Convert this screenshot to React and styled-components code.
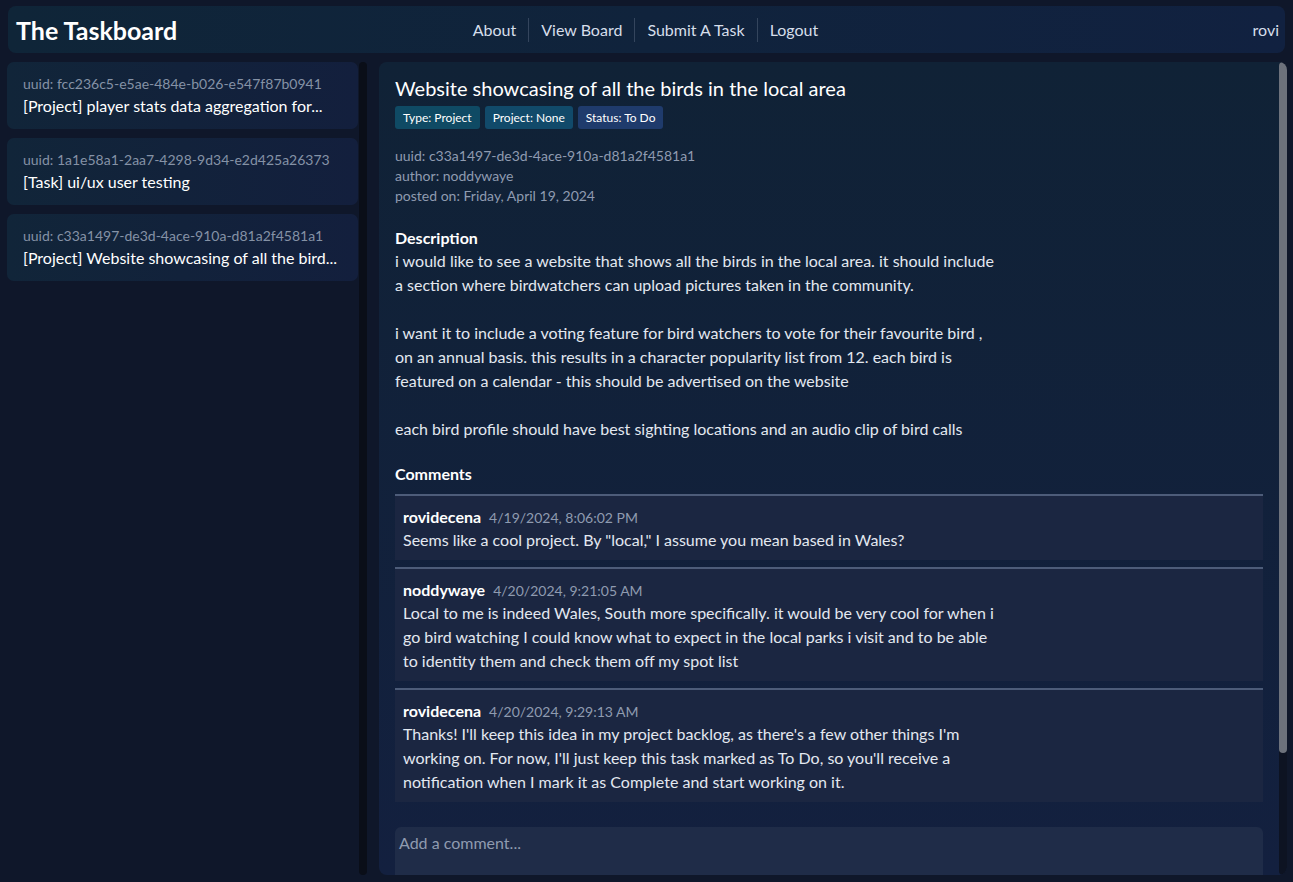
import React from 'react';
import styled, { createGlobalStyle } from 'styled-components';

const GlobalStyle = createGlobalStyle`
  html, body {
    margin: 0;
    padding: 0;
    height: 100%;
    background: #0f172a;
    font-family: Lato, "Noto Sans", sans-serif;
    color: #e8edf5;
  }
  #root {
    height: 100%;
  }
  * {
    box-sizing: border-box;
  }
`;

const Page = styled.div`
  height: 100vh;
  display: grid;
  grid-template-rows: 47px 1fr;
  gap: 9px;
  padding: 6px 6px 7px 7px;
`;

const Header = styled.header`
  display: grid;
  grid-template-columns: 1fr auto 1fr;
  align-items: center;
  padding: 0 6px 0 8px;
  margin: 0 2px 0 1px;
  border-radius: 8px;
  background: linear-gradient(90deg, #0f2538 0%, #112140 100%);
`;

const Brand = styled.h1`
  margin: 0;
  font-size: 25px;
  font-weight: 700;
  color: #ffffff;
`;

const Nav = styled.nav`
  display: flex;
  align-items: center;
  margin-right: 4px;
`;

const NavLink = styled.a`
  padding: 0 12px;
  font-size: 16px;
  line-height: 24px;
  color: #d6deea;
  text-decoration: none;
  border-left: ${p => (p.$first ? 'none' : '1px solid #34455d')};
`;

const User = styled.span`
  justify-self: end;
  font-size: 16px;
  color: #d6deea;
`;

const Body = styled.div`
  display: grid;
  grid-template-columns: 360px 1fr;
  gap: 12px;
  min-height: 0;
`;

const Sidebar = styled.aside`
  display: flex;
  gap: 1px;
  min-height: 0;
`;

const TaskList = styled.div`
  flex: 1;
  display: flex;
  flex-direction: column;
  gap: 9px;
  overflow: hidden;
`;

const Track = styled.div`
  width: 8px;
  flex-shrink: 0;
  display: flex;
  flex-direction: column;
  border-radius: 4px;
  background: ${p => p.$bg};
`;

const Thumb = styled.div`
  border-radius: 4px;
  background: #6d727c;
`;

const TaskCard = styled.div`
  padding: 13px 16px 12px 16px;
  border-radius: 7px;
  background: linear-gradient(90deg, #112539 0%, #131f3d 100%);
  flex-shrink: 0;
`;

const CardUuid = styled.div`
  font-size: 14px;
  line-height: 18px;
  color: #8592a6;
`;

const CardTitle = styled.div`
  margin-top: 2px;
  font-size: 16px;
  line-height: 22px;
  color: #ffffff;
  white-space: nowrap;
  overflow: hidden;
  text-overflow: ellipsis;
`;

const Main = styled.main`
  display: flex;
  min-height: 0;
  border-radius: 8px;
  background: linear-gradient(180deg, #102236 0%, #13203f 100%);
  overflow: hidden;
`;

const MainContent = styled.div`
  flex: 1;
  min-width: 0;
  overflow: hidden;
  padding: 12px 16px 20px 16px;
`;

const TaskTitle = styled.h2`
  margin: 0;
  font-size: 20px;
  line-height: 28px;
  font-weight: 400;
  color: #ffffff;
`;

const Badges = styled.div`
  display: flex;
  gap: 5px;
  margin-top: 4px;
`;

const Badge = styled.span`
  padding: 0 8px;
  font-size: 12px;
  line-height: 23px;
  border-radius: 3px;
  color: #ffffff;
  background: ${p => p.$bg};
`;

const Meta = styled.div`
  margin-top: 17px;
  font-size: 14px;
  line-height: 20px;
  color: #8f9bb0;
`;

const SectionHeading = styled.h3`
  margin: ${p => (p.$gap ? p.$gap : 21)}px 0 0 0;
  font-size: 16px;
  line-height: 22px;
  font-weight: 700;
  color: #ffffff;
`;

const Description = styled.p`
  margin: 0;
  max-width: 600px;
  font-size: 16px;
  line-height: 24px;
  white-space: pre-wrap;
  color: #e3e8f0;
`;

const CommentList = styled.div`
  display: flex;
  flex-direction: column;
  gap: 7px;
  margin-top: 9px;
`;

const Comment = styled.div`
  padding: 11px 8px 8px 8px;
  background: #1b2641;
  border-top: 2px solid #4d5c79;
`;

const CommentHead = styled.div`
  display: flex;
  align-items: baseline;
  gap: 8px;
`;

const Author = styled.span`
  font-size: 16px;
  font-weight: 700;
  color: #ffffff;
`;

const Stamp = styled.span`
  font-size: 14px;
  color: #8f9bb0;
`;

const CommentText = styled.p`
  margin: 2px 0 0 0;
  max-width: 595px;
  font-size: 16px;
  line-height: 24px;
  color: #e3e8f0;
`;

const CommentBox = styled.textarea`
  display: block;
  width: 100%;
  height: 100px;
  margin-top: 25px;
  padding: 6px 4px;
  border: none;
  border-radius: 6px;
  resize: none;
  background: #1f2c48;
  color: #e3e8f0;
  font-family: inherit;
  font-size: 16px;

  &::placeholder {
    color: #8f9bb0;
  }
`;

const PostButton = styled.button`
  margin-top: 12px;
  padding: 8px 16px;
  border: none;
  border-radius: 6px;
  background: #1e3a6e;
  color: #ffffff;
  font-family: inherit;
  font-size: 14px;
`;

const tasks = [
  { uuid: 'fcc236c5-e5ae-484e-b026-e547f87b0941', title: '[Project] player stats data aggregation for...' },
  { uuid: '1a1e58a1-2aa7-4298-9d34-e2d425a26373', title: '[Task] ui/ux user testing' },
  { uuid: 'c33a1497-de3d-4ace-910a-d81a2f4581a1', title: '[Project] Website showcasing of all the bird...' },
];

const comments = [
  {
    author: 'rovidecena',
    time: '4/19/2024, 8:06:02 PM',
    text: 'Seems like a cool project. By "local," I assume you mean based in Wales?',
  },
  {
    author: 'noddywaye',
    time: '4/20/2024, 9:21:05 AM',
    text: 'Local to me is indeed Wales, South more specifically. it would be very cool for when i go bird watching I could know what to expect in the local parks i visit and to be able to identity them and check them off my spot list',
  },
  {
    author: 'rovidecena',
    time: '4/20/2024, 9:29:13 AM',
    text: "Thanks! I'll keep this idea in my project backlog, as there's a few other things I'm working on. For now, I'll just keep this task marked as To Do, so you'll receive a notification when I mark it as Complete and start working on it.",
  },
];

const description =
  'i would like to see a website that shows all the birds in the local area. it should include a section where birdwatchers can upload pictures taken in the community.\n\n' +
  'i want it to include a voting feature for bird watchers to vote for their favourite bird , on an annual basis. this results in a character popularity list from 12. each bird is featured on a calendar - this should be advertised on the website\n\n' +
  'each bird profile should have best sighting locations and an audio clip of bird calls';

const App = () => {
  return (
    <>
      <GlobalStyle />
      <Page>
        <Header>
          <Brand>The Taskboard</Brand>
          <Nav>
            <NavLink $first>About</NavLink>
            <NavLink>View Board</NavLink>
            <NavLink>Submit A Task</NavLink>
            <NavLink>Logout</NavLink>
          </Nav>
          <User>rovi</User>
        </Header>
        <Body>
          <Sidebar>
            <TaskList>
              {tasks.map(t => (
                <TaskCard key={t.uuid}>
                  <CardUuid>uuid: {t.uuid}</CardUuid>
                  <CardTitle>{t.title}</CardTitle>
                </TaskCard>
              ))}
            </TaskList>
            <Track $bg="#0a0e18" />
          </Sidebar>
          <Main>
            <MainContent>
              <TaskTitle>Website showcasing of all the birds in the local area</TaskTitle>
              <Badges>
                <Badge $bg="#0f4a64">Type: Project</Badge>
                <Badge $bg="#114a6a">Project: None</Badge>
                <Badge $bg="#1f3b6c">Status: To Do</Badge>
              </Badges>
              <Meta>
                <div>uuid: c33a1497-de3d-4ace-910a-d81a2f4581a1</div>
                <div>author: noddywaye</div>
                <div>posted on: Friday, April 19, 2024</div>
              </Meta>
              <SectionHeading>Description</SectionHeading>
              <Description>{description}</Description>
              <SectionHeading $gap={22}>Comments</SectionHeading>
              <CommentList>
                {comments.map((c, i) => (
                  <Comment key={i}>
                    <CommentHead>
                      <Author>{c.author}</Author>
                      <Stamp>{c.time}</Stamp>
                    </CommentHead>
                    <CommentText>{c.text}</CommentText>
                  </Comment>
                ))}
              </CommentList>
              <CommentBox placeholder="Add a comment..." />
              <PostButton>Post Comment</PostButton>
            </MainContent>
            <Track $bg="#0d1322">
              <Thumb style={{ height: '85%' }} />
            </Track>
          </Main>
        </Body>
      </Page>
    </>
  );
};

export default App;
